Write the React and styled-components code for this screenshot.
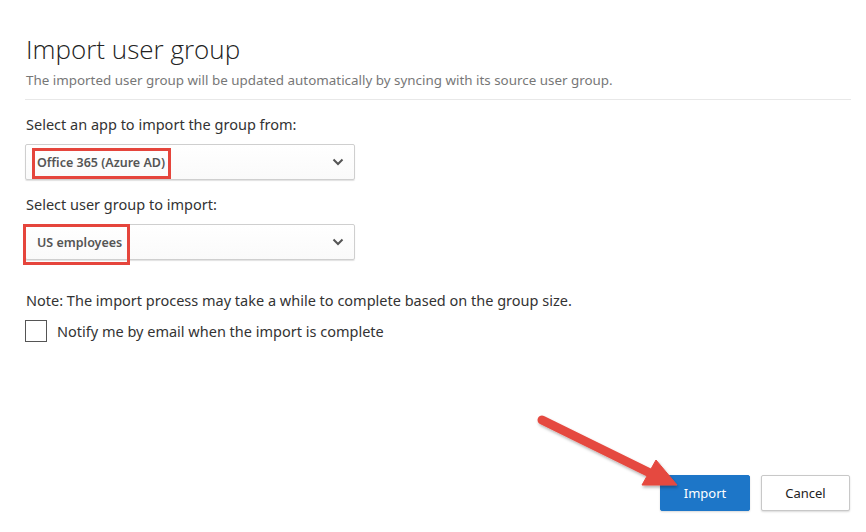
import React from "react";
import styled, { createGlobalStyle } from "styled-components";

const GlobalStyle = createGlobalStyle`
  html, body {
    margin: 0;
    padding: 0;
    background: #ffffff;
  }
  body {
    font-family: "Segoe UI", "Noto Sans", "Open Sans", sans-serif;
    color: #333333;
  }
`;

const Page = styled.div`
  position: relative;
  width: 866px;
  height: 532px;
  box-sizing: border-box;
  padding: 32px 15px 0 25px;
  display: flex;
  flex-direction: column;
  overflow: hidden;
`;

const Title = styled.h1`
  margin: 0 0 0 1px;
  font-family: "Open Sans", sans-serif;
  font-weight: 300;
  font-size: 26px;
  line-height: 34px;
  color: #222222;
`;

const Subtitle = styled.p`
  margin: 5px 0 0 1px;
  font-size: 13.4px;
  line-height: 18px;
  color: #777777;
`;

const Divider = styled.hr`
  margin: 10px 0 0 0;
  border: none;
  border-top: 1px solid #e8e8e8;
  width: 826px;
`;

const Label = styled.label`
  display: block;
  margin: ${(p) => p.$top}px 0 0 1px;
  font-size: 14.5px;
  line-height: 20px;
  color: #333333;
`;

const SelectBox = styled.div`
  position: relative;
  margin-top: 10px;
  width: 330px;
  height: 36px;
  box-sizing: border-box;
  border: 1px solid #cfcfcf;
  border-radius: 2px;
  background: linear-gradient(#ffffff, #fafafa);
  box-shadow: 0 1px 1px rgba(0, 0, 0, 0.12);
  display: flex;
  align-items: center;
  padding: 0 10px 0 11px;
`;

const SelectValue = styled.span`
  flex: 1;
  font-size: 12.5px;
  font-weight: 600;
  color: #555555;
`;

const Highlight = styled.span`
  position: absolute;
  left: ${(p) => p.$left}px;
  top: ${(p) => p.$top}px;
  width: ${(p) => p.$width}px;
  height: ${(p) => p.$height}px;
  box-sizing: border-box;
  border: 3px solid #e5453c;
  pointer-events: none;
`;

const Chevron = () => (
  <svg width="12" height="8" viewBox="0 0 12 8">
    <path d="M1.5 1.5 L6 6 L10.5 1.5" fill="none" stroke="#555" strokeWidth="2" />
  </svg>
);

const Note = styled.p`
  margin: 30px 0 0 1px;
  font-size: 14.5px;
  line-height: 20px;
  color: #333333;
`;

const CheckRow = styled.label`
  margin-top: 10px;
  display: flex;
  align-items: center;
  gap: 10px;
  font-size: 14.5px;
  color: #333333;
`;

const Box = styled.span`
  width: 22px;
  height: 22px;
  box-sizing: border-box;
  border: 1px solid #555555;
  background: #ffffff;
`;

const Footer = styled.div`
  margin-top: auto;
  margin-bottom: 21px;
  display: flex;
  justify-content: flex-end;
  gap: 11px;
  padding-right: 1px;
`;

const Button = styled.button`
  width: ${(p) => (p.$primary ? 90 : 89)}px;
  height: 36px;
  border-radius: 2px;
  font-family: inherit;
  font-size: 13px;
  cursor: pointer;
  border: 1px solid ${(p) => (p.$primary ? "#1d76c8" : "#c8c8c8")};
  background: ${(p) => (p.$primary ? "#1d76c8" : "#ffffff")};
  color: ${(p) => (p.$primary ? "#ffffff" : "#222222")};
  box-shadow: 0 1px 2px rgba(0, 0, 0, 0.15);
`;

const Arrow = styled.svg`
  position: absolute;
  left: 530px;
  top: 405px;
  overflow: visible;
  pointer-events: none;
`;

export default function App() {
  return (
    <Page>
      <GlobalStyle />
      <Title>Import user group</Title>
      <Subtitle>
        The imported user group will be updated automatically by syncing with its source user group.
      </Subtitle>
      <Divider />

      <Label $top={14}>Select an app to import the group from:</Label>
      <SelectBox>
        <SelectValue>Office 365 (Azure AD)</SelectValue>
        <Chevron />
        <Highlight $left={6} $top={3} $width={139} $height={31} />
      </SelectBox>

      <Label $top={14}>Select user group to import:</Label>
      <SelectBox>
        <SelectValue>US employees</SelectValue>
        <Chevron />
        <Highlight $left={-3} $top={-1} $width={107} $height={41} />
      </SelectBox>

      <Note>Note: The import process may take a while to complete based on the group size.</Note>
      <CheckRow>
        <Box />
        Notify me by email when the import is complete
      </CheckRow>

      <Footer>
        <Button $primary>Import</Button>
        <Button>Cancel</Button>
      </Footer>

      <Arrow width="160" height="100" viewBox="0 0 160 100">
        <defs>
          <filter id="sh" x="-20%" y="-20%" width="140%" height="140%">
            <feDropShadow dx="1" dy="2" stdDeviation="1.5" floodColor="#000" floodOpacity="0.3" />
          </filter>
        </defs>
        <g filter="url(#sh)" fill="#e5493f" stroke="#e5493f">
          <line x1="12" y1="15" x2="120" y2="68" strokeWidth="9" strokeLinecap="round" />
          <polygon points="126,55 147,80 112,80" strokeWidth="1" strokeLinejoin="round" />
        </g>
      </Arrow>
    </Page>
  );
}
